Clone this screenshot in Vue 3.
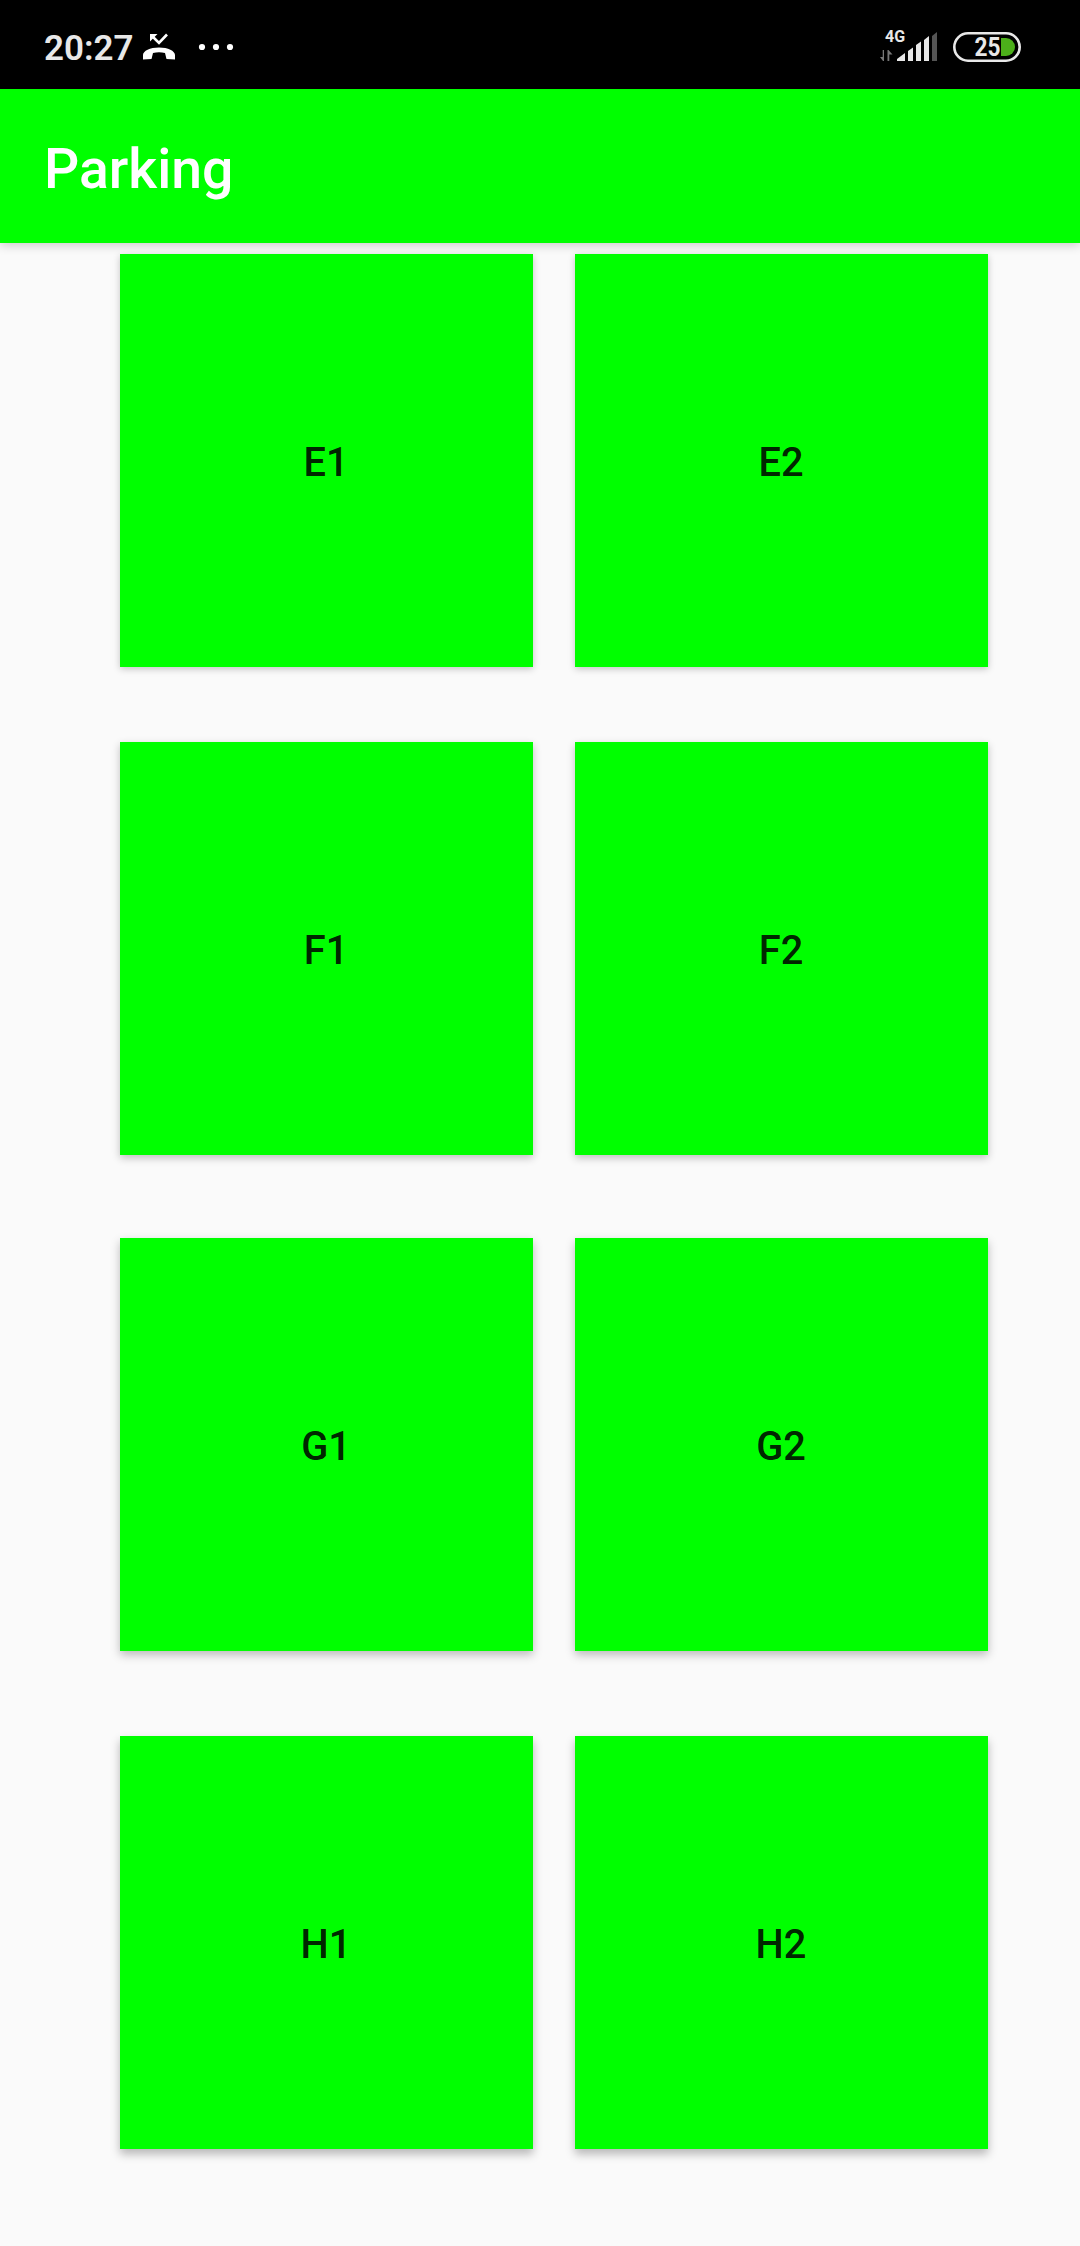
<script setup>
const rows = [
  { id: 'E', spots: ['E1', 'E2'] },
  { id: 'F', spots: ['F1', 'F2'] },
  { id: 'G', spots: ['G1', 'G2'] },
  { id: 'H', spots: ['H1', 'H2'] },
]
</script>

<template>
  <div class="screen">
    <div class="status">
      <span class="time">20:27</span>
      <svg class="missed" width="34" height="30" viewBox="0 0 34 30">
        <path d="M1 26.500V22C1 18 8 14.500 17 14.500s16 3.500 16 7.500v4.500l-8.500-.5-1.500-6q-6-1.500-12 0l-1.500 6z" fill="#fff" />
        <path d="M10 3l7 7 8-8.500" fill="none" stroke="#fff" stroke-width="2.600" />
        <path d="M8 1h7.500L8 8.500z" fill="#fff" />
      </svg>
      <svg class="dots" width="36" height="8" viewBox="0 0 36 8">
        <circle cx="4" cy="4" r="3.100" /><circle cx="18" cy="4" r="3.100" /><circle cx="32" cy="4" r="3.100" />
      </svg>
      <svg class="signal" width="58" height="42" viewBox="0 -10 58 42">
        <text x="5" y="12" class="net">4G</text>
        <path d="M4 20v11h-1L0 27h2.700v-7zM7.500 31V20h1l4 4.500H9.300V31z" fill="#777" />
        <path d="M17 31v-2l8-6v8zM28 31V21l5-3.500V31zM36 31V15l5-3.500V31zM44 31V10l5-4v25z" fill="#e8e8e8" />
        <path d="M52 31V6l5-4v29z" fill="#555" />
      </svg>
      <svg class="battery" width="68" height="30" viewBox="0 0 68 30">
        <rect x="1.300" y="1.300" width="65.400" height="27.400" rx="13.700" fill="none" stroke="#e8e8e8" stroke-width="2.600" />
        <path d="M48 6h5a9 9 0 0 1 0 18h-5z" fill="#4caf1a" />
        <text x="21.500" y="24.300" class="pct" textLength="26" lengthAdjust="spacingAndGlyphs">25</text>
      </svg>
    </div>
    <header class="bar"><h1>Parking</h1></header>
    <main class="lot">
      <div v-for="row in rows" :key="row.id" class="row" :class="'row-' + row.id">
        <button v-for="spot in row.spots" :key="spot" class="spot">{{ spot }}</button>
      </div>
    </main>
  </div>
</template>

<style>
body {
  margin: 0;
  background: #fafafa;
}
</style>

<style scoped>
.screen {
  width: 1080px;
  height: 2246px;
  overflow: hidden;
  background: #fafafa;
  font-family: Roboto, "Liberation Sans", sans-serif;
}
.status {
  display: flex;
  align-items: flex-start;
  box-sizing: border-box;
  height: 89px;
  background: #000;
}
.time {
  margin: 28px 0 0 44px;
  width: 98px;
  font-size: 35px;
  line-height: 42px;
  font-weight: 600;
  color: #e8e8e8;
  white-space: nowrap;
}
.missed {
  margin-top: 33px;
}
.dots {
  margin: 43px 0 0 22px;
  fill: #fff;
}
.signal {
  margin: 20px 0 0 auto;
}
.net {
  font-size: 16px;
  font-weight: 700;
  fill: #e8e8e8;
}
.battery {
  margin: 32px 59px 0 15px;
}
.pct {
  font-size: 25px;
  font-weight: 700;
  fill: #e8e8e8;
}
.bar {
  position: relative;
  z-index: 1;
  display: flex;
  align-items: center;
  box-sizing: border-box;
  height: 154px;
  padding-left: 44px;
  background: #0f0;
  box-shadow: 0 2px 10px rgba(0, 0, 0, 0.2);
}
h1 {
  margin: 8px 0 0;
  font-size: 55.3px;
  line-height: 64px;
  font-weight: 500;
  color: #fff;
}
.lot {
  padding: 11px 92px 0 120px;
}
.row {
  display: flex;
  gap: 42px;
  height: 413px;
}
.row-F {
  margin-top: 75px;
}
.row-G {
  margin-top: 83px;
}
.row-H {
  margin-top: 85px;
}
.spot {
  width: 413px;
  height: 413px;
  padding: 3px 1px 0 0;
  border: 0;
  background: #0f0;
  color: rgba(0, 0, 0, 0.87);
  font-family: inherit;
  font-size: 39.8px;
  font-weight: 500;
  box-shadow: 0 2px 7px rgba(0, 0, 0, 0.22);
}
.row-F .spot {
  box-shadow: 0 3px 8px rgba(0, 0, 0, 0.24);
}
.row-G .spot {
  box-shadow: 0 4px 9px rgba(0, 0, 0, 0.26);
}
.row-H .spot {
  box-shadow: 0 5px 9px rgba(0, 0, 0, 0.28);
}
</style>
